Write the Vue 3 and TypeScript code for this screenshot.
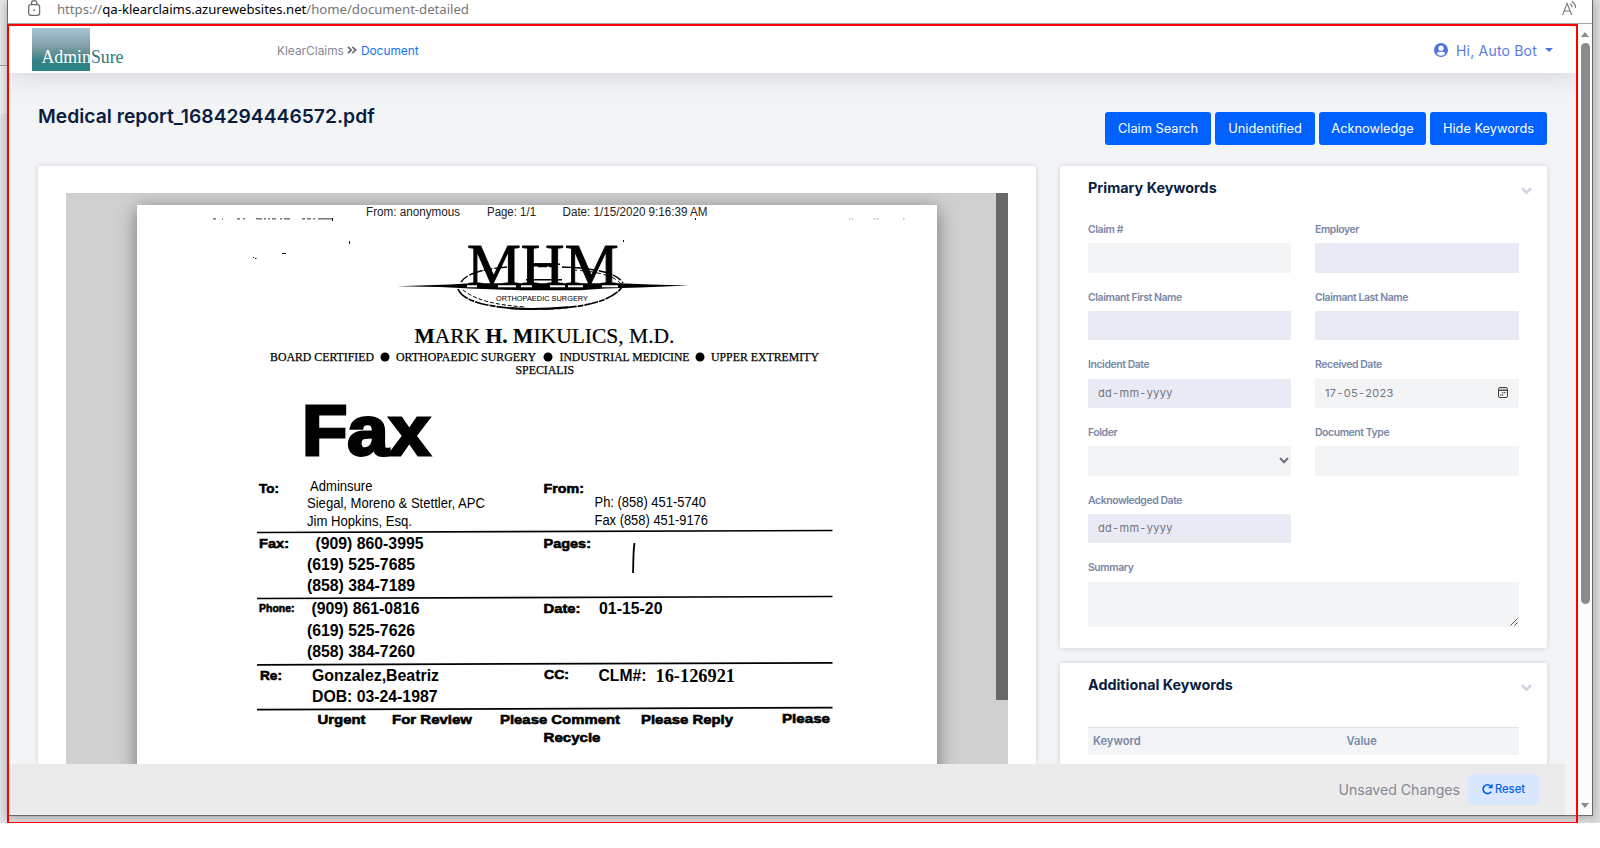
<script setup lang="ts">
interface Field {
  label: string
  kind: 'text' | 'date' | 'select' | 'area'
  value?: string
  disabled?: boolean
  newRow?: boolean
}

interface FaxText {
  x: number
  y: number
  w: number
  t: string
  c: string
}

const actions: { label: string; width: number }[] = [
  { label: 'Claim Search', width: 106 },
  { label: 'Unidentified', width: 100 },
  { label: 'Acknowledge', width: 107 },
  { label: 'Hide Keywords', width: 117 },
]

const fields: Field[] = [
  { label: 'Claim #', kind: 'text' },
  { label: 'Employer', kind: 'text', disabled: true },
  { label: 'Claimant First Name', kind: 'text', disabled: true },
  { label: 'Claimant Last Name', kind: 'text', disabled: true },
  { label: 'Incident Date', kind: 'date', value: 'dd-mm-yyyy', disabled: true },
  { label: 'Received Date', kind: 'date', value: '17-05-2023' },
  { label: 'Folder', kind: 'select' },
  { label: 'Document Type', kind: 'text' },
  { label: 'Acknowledged Date', kind: 'date', value: 'dd-mm-yyyy', disabled: true },
  { label: 'Summary', kind: 'area', newRow: true },
]

// The fax sheet's viewBox starts at the sheet's own corner (137, 205).
const faxTexts: FaxText[] = [
  { x: 366, y: 216, w: 94, t: 'From: anonymous', c: 'sm' },
  { x: 487, y: 216, w: 49, t: 'Page: 1/1', c: 'sm' },
  { x: 562.5, y: 216, w: 145, t: 'Date: 1/15/2020 9:16:39 AM', c: 'sm' },
  { x: 270, y: 361, w: 104, t: 'BOARD CERTIFIED', c: 'serif' },
  { x: 396, y: 361, w: 140, t: 'ORTHOPAEDIC SURGERY', c: 'serif' },
  { x: 559.5, y: 361, w: 130, t: 'INDUSTRIAL MEDICINE', c: 'serif' },
  { x: 711, y: 360.5, w: 108, t: 'UPPER EXTREMITY', c: 'serif' },
  { x: 515.5, y: 374.4, w: 58.5, t: 'SPECIALIS', c: 'serif' },
  { x: 302, y: 455, w: 128, t: 'Fax', c: 'huge' },
  { x: 259, y: 493.4, w: 20, t: 'To:', c: 'lab' },
  { x: 310, y: 491, w: 62.5, t: 'Adminsure', c: 'body' },
  { x: 307, y: 508, w: 178, t: 'Siegal, Moreno & Stettler, APC', c: 'body' },
  { x: 307, y: 525.7, w: 105, t: 'Jim Hopkins, Esq.', c: 'body' },
  { x: 543.5, y: 492.7, w: 40.5, t: 'From:', c: 'lab' },
  { x: 594.5, y: 507, w: 111.5, t: 'Ph: (858) 451-5740', c: 'body' },
  { x: 594.5, y: 524.7, w: 113.5, t: 'Fax (858) 451-9176', c: 'body' },
  { x: 259, y: 548.4, w: 30, t: 'Fax:', c: 'lab' },
  { x: 315.5, y: 548.7, w: 108, t: '(909) 860-3995', c: 'bold' },
  { x: 307, y: 570, w: 108, t: '(619) 525-7685', c: 'bold' },
  { x: 307, y: 591, w: 108, t: '(858) 384-7189', c: 'bold' },
  { x: 543.5, y: 547.7, w: 47.5, t: 'Pages:', c: 'lab' },
  { x: 259, y: 611.7, w: 35.5, t: 'Phone:', c: 'lab tiny' },
  { x: 311.5, y: 614, w: 108, t: '(909) 861-0816', c: 'bold' },
  { x: 307, y: 635.7, w: 108, t: '(619) 525-7626', c: 'bold' },
  { x: 307, y: 656.7, w: 108, t: '(858) 384-7260', c: 'bold' },
  { x: 543.5, y: 613.4, w: 37, t: 'Date:', c: 'lab' },
  { x: 599, y: 613.7, w: 63.5, t: '01-15-20', c: 'bold' },
  { x: 260, y: 680.4, w: 22, t: 'Re:', c: 'lab' },
  { x: 312, y: 680.7, w: 127, t: 'Gonzalez,Beatriz', c: 'bold' },
  { x: 312, y: 701.7, w: 125.5, t: 'DOB: 03-24-1987', c: 'bold' },
  { x: 544, y: 679.4, w: 25, t: 'CC:', c: 'lab' },
  { x: 598.5, y: 681.4, w: 48, t: 'CLM#:', c: 'bold' },
  { x: 655.5, y: 681.6, w: 79.5, t: '16-126921', c: 'num' },
  { x: 317.5, y: 724.2, w: 48, t: 'Urgent', c: 'lab' },
  { x: 392, y: 724.2, w: 80, t: 'For Review', c: 'lab' },
  { x: 500, y: 724, w: 120, t: 'Please Comment', c: 'lab' },
  { x: 641, y: 723.6, w: 92, t: 'Please Reply', c: 'lab' },
  { x: 782, y: 722.5, w: 48, t: 'Please', c: 'lab' },
  { x: 543.5, y: 742.4, w: 57, t: 'Recycle', c: 'lab' },
]

const rules: number[] = [532.5, 598.5, 664.8, 709.7]
const bullets: number[] = [385, 548, 700]
</script>

<template>
  <div class="screen">
    <div class="desktop">
      <div class="browser">
        <div class="urlbar">
          <svg class="lock" width="14" height="18" viewBox="0 0 14 18" fill="none" stroke="#6c6c6c" stroke-width="1.3">
            <rect x=".7" y="4.7" width="10.9" height="10.6" rx="2" />
            <path d="M3.5 4.7V3.4a2.7 2.7 0 0 1 5.4 0v1.3" />
            <circle cx="6.2" cy="10.2" r=".9" fill="#6c6c6c" stroke="none" />
          </svg>
          <span class="url">https://<b>qa-klearclaims.azurewebsites.net</b>/home/document-detailed</span>
          <svg class="read" width="17" height="16" viewBox="0 0 17 16" fill="none" stroke="#777" stroke-width="1.1">
            <path d="M1.5 15 6.1 3.4 10.7 15M3.2 11h5.8M9.2 3.8c1.3.8 2 2 1.9 3.5M10.8 1.4c2.4 1.4 3.9 3.8 3.8 6.5" />
          </svg>
        </div>

        <div class="viewport">
          <div class="app">
            <header class="topbar">
              <svg class="logo" width="100" height="44" viewBox="0 0 100 44">
                <defs>
                  <linearGradient id="teal" x1="0" y1="0" x2="0" y2="1">
                    <stop offset="0" stop-color="#a8c4d8" />
                    <stop offset=".45" stop-color="#7e9ca4" />
                    <stop offset=".78" stop-color="#2e8083" />
                    <stop offset="1" stop-color="#2b8488" />
                  </linearGradient>
                </defs>
                <rect x="0" y="0" width="58" height="43" fill="url(#teal)" />
                <text x="9.5" y="34.5" textLength="82" lengthAdjust="spacingAndGlyphs"><tspan fill="#fff">Admin</tspan><tspan fill="#2c7c80">Sure</tspan></text>
              </svg>
              <nav class="crumbs">
                <span>KlearClaims</span>
                <svg width="10" height="8" viewBox="0 0 10 8" fill="none" stroke="#6f7085" stroke-width="1.8">
                  <path d="M1 .8 4.2 4 1 7.2M5.4.8 8.6 4 5.4 7.2" />
                </svg>
                <a>Document</a>
              </nav>
              <div class="user">
                <svg width="14" height="14" viewBox="0 0 14 14">
                  <circle cx="7" cy="7" r="7" fill="#4e73df" />
                  <circle cx="7" cy="5.2" r="2.6" fill="#fff" />
                  <path d="M2.7 11.1c.4-1.7 1.6-2.4 2.6-2.4h3.4c1 0 2.2.7 2.6 2.4A6 6 0 0 1 7 12.8a6 6 0 0 1-4.3-1.7z" fill="#fff" />
                </svg>
                <span>Hi, Auto Bot</span>
                <i class="caret"></i>
              </div>
            </header>

            <div class="heading">
              <h1>Medical report_1684294446572.pdf</h1>
              <div class="actions">
                <button v-for="a in actions" :key="a.label" :style="{ width: a.width + 'px' }">{{ a.label }}</button>
              </div>
            </div>

            <div class="columns">
              <section class="card preview">
                <div class="viewer">
                  <svg class="sheet" width="800" height="700" viewBox="137 205 800 700">
                    <g class="ink">
                      <path d="M213 218.8h3M222 218.8h1M237 218.8h3M243 218.8h2M256 218.8h6M264 218.8h2M268 218.8h2M272 218.8h4M280 218.8h2M284 218.8h6M302 218.8h3M307 218.8h4M313 218.8h2M318 218.8h14" stroke="#777" stroke-width="1.5" />
                      <path d="M849 218.8h4M874 218.8h6M903 218.8h2" stroke="#aaa" stroke-width="1.3" stroke-dasharray="1.5 1.5" />
                      <path d="M282 253.5h4M349.5 241v3M253 257.5h1M255 258.5h1.5M332.5 218v3M695.5 218v2M623.5 240v2" stroke="#111" stroke-width="1" />

                      <g fill="none" stroke="#000">
                        <path d="M461 282c6-9 22-13 46-15M538 266.5h18M562 267c30 1 54 5 61 16" stroke-width="1.4" stroke-dasharray="9 2 14 1" />
                        <path d="M572 270c22 1 42 5 49 14" stroke-width="1" stroke-dasharray="5 3" />
                        <path d="M458 289c5 13 34 20 78 20 50 0 77-9 86-22" stroke-width="1.7" stroke-dasharray="14 1 6 1" />
                        <path d="M463 290c14 11 34 15 62 17" stroke-width="1" stroke-dasharray="4 2" />
                        <path d="M510 308.3c18 1.2 36 1 58-1" stroke-width="2" />
                        <path d="M528 264.2h32M526 279.8h36" stroke-width="1.4" />
                      </g>
                      <text class="mhm" x="467" y="284.5" textLength="151.5" lengthAdjust="spacingAndGlyphs">MHM</text>
                      <path d="M397 286.3 450 284.6 470 283.2 620 283.2 650 284.4 689 285.5 640 287.6 605 288.6 580 290.3 520 290.3 470 288.5 440 287z" />
                      <path d="M467 286.3h10M498 286.3h18M521 286.3h11M550 286.3h15M568 286.3h15M602 286.3h16" stroke="#fff" stroke-width="2" />
                      <text class="micro" x="496" y="300.5" textLength="92" lengthAdjust="spacingAndGlyphs">ORTHOPAEDIC SURGERY</text>

                      <text class="doctor" x="414.5" y="343" textLength="260" lengthAdjust="spacingAndGlyphs"><tspan class="cap">M</tspan>ARK <tspan class="cap">H. M</tspan>IKULICS, M.D.</text>
                      <circle v-for="b in bullets" :key="b" :cx="b" cy="357" r="4.5" />

                      <text
                        v-for="(f, i) in faxTexts"
                        :key="i"
                        :class="f.c"
                        :x="f.x"
                        :y="f.y"
                        :textLength="f.w"
                        lengthAdjust="spacingAndGlyphs"
                      >{{ f.t }}</text>

                      <path v-for="r in rules" :key="r" :d="`M257 ${r}L832.5 ${r - 2}`" stroke="#000" stroke-width="1.7" />
                      <path d="M634.5 543c-1.5 10-1 20-1.5 30" fill="none" stroke="#000" stroke-width="1.8" />
                    </g>
                  </svg>
                  <div class="viewer-thumb"></div>
                </div>
              </section>

              <aside class="side">
                <section class="card primary">
                  <div class="card-head">
                    <h2>Primary Keywords</h2>
                    <svg width="11" height="8" viewBox="0 0 11 8" fill="none" stroke="#d1d3e2" stroke-width="2.6"><path d="M1 1.3 5.5 5.6 10 1.3" /></svg>
                  </div>
                  <div class="form">
                    <div v-for="f in fields" :key="f.label" class="field" :class="{ wide: f.newRow }">
                      <label>{{ f.label }}</label>
                      <div class="input" :class="[f.kind, { off: f.disabled }]">
                        <span v-if="f.value" class="date-parts">
                          <template v-for="(part, i) in f.value.split('-')" :key="i"><i v-if="i">-</i><span>{{ part }}</span></template>
                        </span>
                        <svg v-if="f.kind === 'date' && !f.disabled" width="10" height="11" viewBox="0 0 10 11">
                          <rect x=".5" y=".5" width="9" height="10" rx="1.5" fill="none" stroke="#444" />
                          <path d="M.5 2.2h9" stroke="#888" />
                          <path d="M.5 3.5h9" stroke="#222" stroke-width=".8" />
                          <path d="M4.3 5.8h4M2.2 8h3.8" stroke="#000" stroke-width="1.1" stroke-dasharray="1.1 .8" />
                        </svg>
                        <svg v-if="f.kind === 'select'" width="10" height="7" viewBox="0 0 10 7" fill="none" stroke="#6e707e" stroke-width="2"><path d="M1 1 5 5.2 9 1" /></svg>
                        <svg v-if="f.kind === 'area'" width="8" height="8" viewBox="0 0 8 8" stroke="#555" stroke-width="1"><path d="M.5 7.5l7-7M4.5 7.5l3-3" /></svg>
                      </div>
                    </div>
                  </div>
                </section>

                <section class="card extra">
                  <div class="card-head">
                    <h2>Additional Keywords</h2>
                    <svg width="11" height="8" viewBox="0 0 11 8" fill="none" stroke="#d1d3e2" stroke-width="2.6"><path d="M1 1.3 5.5 5.6 10 1.3" /></svg>
                  </div>
                  <div class="thead"><span>Keyword</span><span>Value</span></div>
                </section>
              </aside>
            </div>

            <footer class="savebar">
              <span>Unsaved Changes</span>
              <button>
                <svg width="11" height="12" viewBox="0 0 11 12" fill="none" stroke="#0061f2" stroke-width="1.7">
                  <path d="M9.2 8.6A4.4 4.4 0 1 1 8.8 3.2" />
                  <path d="M10.6.6v4.6H6z" fill="#0061f2" stroke="none" />
                </svg>
                Reset
              </button>
            </footer>
          </div>
          <div class="scroll"><i class="up"></i><i class="thumb"></i><i class="down"></i></div>
        </div>
      </div>
      <div class="marker"></div>
    </div>
  </div>
</template>

<style>
body {
  margin: 0;
  background: #fff;
  overflow: hidden;
}
</style>

<style scoped>
* {
  box-sizing: border-box;
}
.screen {
  height: 848px;
  width: 1600px;
  font-family: Inter, 'Liberation Sans', sans-serif;
  background: #fff;
}
.desktop {
  position: relative;
  height: 823px;
  padding: 0 7px;
  overflow: hidden;
  background: linear-gradient(90deg, transparent 1590px, #dcdcdc 1590px), linear-gradient(#e6e6e6 0 65px, #a5a5a5 65px 66px, #efefef 66px 114px, #e3e4e6 114px);
}
.browser {
  display: flex;
  flex-direction: column;
  width: 1586px;
  height: 816px;
  background: #fff;
  border: solid #6b6b6b;
  border-width: 0 1px 1px;
  box-shadow: 0 2px 9px rgba(0, 0, 0, 0.3);
}
.urlbar {
  display: flex;
  flex: none;
  height: 24px;
  padding: 0 14px 0 20px;
  border-bottom: 1px solid #a3a3a3;
}
.lock {
  flex: none;
}
.url {
  flex: 1;
  margin-left: 15px;
  font: 13.2px/19px 'Noto Sans', sans-serif;
  letter-spacing: -0.03px;
  color: #767676;
  white-space: nowrap;
}
.url b {
  font-weight: 400;
  color: #000;
}
.viewport {
  display: flex;
  flex: 1;
  min-height: 0;
}
.app {
  display: flex;
  flex-direction: column;
  width: 1570px;
  overflow: hidden;
  background: #f2f4f6;
}
.topbar {
  display: flex;
  align-items: center;
  flex: none;
  height: 49px;
  padding: 3px 24px 0;
  background: #fff;
  box-shadow: 0 3px 28px rgba(33, 40, 50, 0.15);
}
.logo {
  flex: none;
  margin-top: -1px;
}
.logo text {
  font: 18px 'Liberation Serif', serif;
}
.crumbs {
  display: flex;
  align-items: center;
  gap: 3.5px;
  margin-left: 145px;
  font-size: 11.9px;
  color: #858796;
}
.crumbs a {
  color: #1573f5;
}
.user {
  display: flex;
  align-items: center;
  margin-left: auto;
  margin-right: 1px;
  font-size: 14px;
  color: #5a7ce0;
}
.user span {
  margin: 0 8px 0 8px;
  letter-spacing: 0.2px;
}
.caret {
  margin-top: -1px;
  border: 4px solid transparent;
  border-top-color: #4e73df;
  border-bottom: 0;
}
.heading {
  display: flex;
  justify-content: space-between;
  flex: none;
  height: 93px;
  padding: 0 31px 0 30px;
}
h1 {
  margin: 31px 0 0;
  font-size: 19.3px;
  font-weight: 600;
  line-height: 24px;
  color: #0b1d3f;
}
.actions {
  display: flex;
  gap: 4px;
  margin-top: 39px;
  height: 33px;
}
.actions button {
  padding: 0 0 1px;
  border: 0;
  border-radius: 3px;
  background: #0061ff;
  color: #fff;
  font: 12.8px Inter, sans-serif;
}
.columns {
  display: flex;
  flex: 1;
  gap: 24px;
  min-height: 0;
  padding: 0 23px 0 30px;
}
.card {
  background: #fff;
  box-shadow: 0 0 5px rgba(33, 40, 50, 0.17);
  border-radius: 2px;
}
.preview {
  width: 998px;
  padding: 27px 28px 0;
}
.viewer {
  display: flex;
  width: 942px;
  height: 600px;
  padding-left: 71px;
  overflow: hidden;
  background: #d0d0d0;
}
.sheet {
  flex: none;
  margin-top: 12px;
  background: #fff;
  box-shadow: 0 4px 18px rgba(0, 0, 0, 0.45);
}
.viewer-thumb {
  z-index: 1;
  width: 12px;
  height: 507px;
  margin-left: auto;
  background: #686868;
}
.ink text {
  font-family: 'Liberation Sans', Arial, sans-serif;
  font-size: 14px;
}
.ink .sm {
  font-size: 12px;
  fill: #222;
}
.ink .serif {
  font-family: 'Liberation Serif', serif;
  font-size: 12.4px;
  stroke: #000;
  stroke-width: 0.25;
}
.ink .mhm {
  font-family: 'Liberation Serif', serif;
  font-size: 59px;
  stroke: #000;
  stroke-width: 0.9;
}
.ink .micro {
  font-size: 7px;
  fill: #000;
}
.ink .doctor {
  font-family: 'Liberation Serif', serif;
  font-size: 22px;
  stroke: #000;
  stroke-width: 0.2;
}
.ink .cap {
  font-weight: 700;
}
.ink .huge {
  font-size: 71px;
  font-weight: 700;
  stroke: #000;
  stroke-width: 3;
}
.ink .lab {
  font-size: 13.5px;
  font-weight: 700;
  stroke: #000;
  stroke-width: 0.6;
}
.ink .tiny {
  font-size: 11px;
}
.ink .body {
  font-size: 14px;
}
.ink .bold {
  font-size: 16px;
  font-weight: 700;
}
.ink .num {
  font-family: 'Liberation Serif', serif;
  font-size: 18px;
  font-weight: 700;
}
.side {
  display: flex;
  flex-direction: column;
  gap: 15px;
  width: 487px;
}
.primary {
  flex: none;
  height: 482px;
  padding: 0 28px;
}
.extra {
  flex: none;
  height: 160px;
  padding: 0 28px;
}
.card-head {
  display: flex;
  justify-content: space-between;
  height: 58px;
  margin-right: -13px;
}
.card-head svg {
  margin-top: 21px;
}
h2 {
  margin: 12px 0 0;
  font-size: 14.35px;
  line-height: 20px;
  font-weight: 700;
  color: #0b1d3f;
}
.form {
  display: grid;
  grid-template-columns: 203px 204px;
  column-gap: 24px;
  grid-auto-rows: 67.7px;
}
.wide {
  grid-column: 1 / 3;
}
label {
  display: block;
  height: 19.3px;
  font-size: 10.4px;
  line-height: 11px;
  font-weight: 600;
  letter-spacing: -0.4px;
  color: #7987a8;
  white-space: nowrap;
}
.input {
  display: flex;
  align-items: center;
  justify-content: space-between;
  height: 29.3px;
  padding: 0 11px 1px 10px;
  border-radius: 1px;
  background: #f3f4f6;
  font-size: 11px;
  letter-spacing: 0.3px;
  color: #72747f;
}
.date-parts {
  display: flex;
  gap: 1px;
}
.date-parts i {
  font-style: normal;
}
.input.off {
  background: #e8ebf3;
}
.input.select {
  justify-content: flex-end;
  padding-right: 2px;
}
.input.area {
  align-items: flex-end;
  justify-content: flex-end;
  height: 45px;
  padding: 0 1px 1px;
}
.thead {
  display: grid;
  grid-template-columns: 253.5px 1fr;
  align-items: center;
  height: 28px;
  margin-top: 6px;
  padding: 0 0 1px 5px;
  border-top: 1px solid #dde1ea;
  background: #f3f4f6;
  font-size: 11.2px;
  font-weight: 600;
  color: #7987a8;
}
.savebar {
  z-index: 2;
  display: flex;
  align-items: center;
  justify-content: flex-end;
  flex: none;
  width: 1557px;
  height: 51px;
  padding: 0 26px 1px 0;
  background: #ebebeb;
  font-size: 14.1px;
  color: #858796;
}
.savebar button {
  display: flex;
  align-items: center;
  justify-content: center;
  gap: 2px;
  width: 71px;
  height: 31px;
  margin-left: 8px;
  padding: 0;
  border: 0;
  border-radius: 4px;
  background: #d9e7ff;
  color: #0061f2;
  font: 500 11.2px Inter, sans-serif;
}
.scroll {
  display: flex;
  flex-direction: column;
  align-items: center;
  width: 14px;
  padding: 8px 0 7px;
  background: #fcfcfc;
}
.up,
.down {
  border: 4.5px solid transparent;
}
.up {
  border-top: 0;
  border-bottom: 5px solid #8b8b8b;
}
.down {
  margin-top: auto;
  border-bottom: 0;
  border-top: 5px solid #8b8b8b;
}
.thumb {
  width: 9px;
  height: 561px;
  margin-top: 6px;
  border-radius: 5px;
  background: #8b8b8b;
}
.marker {
  position: absolute;
  z-index: 5;
  left: 7px;
  top: 24px;
  width: 1571px;
  height: 799px;
  border: 2px solid #f00;
  border-bottom-width: 1px;
}
</style>
